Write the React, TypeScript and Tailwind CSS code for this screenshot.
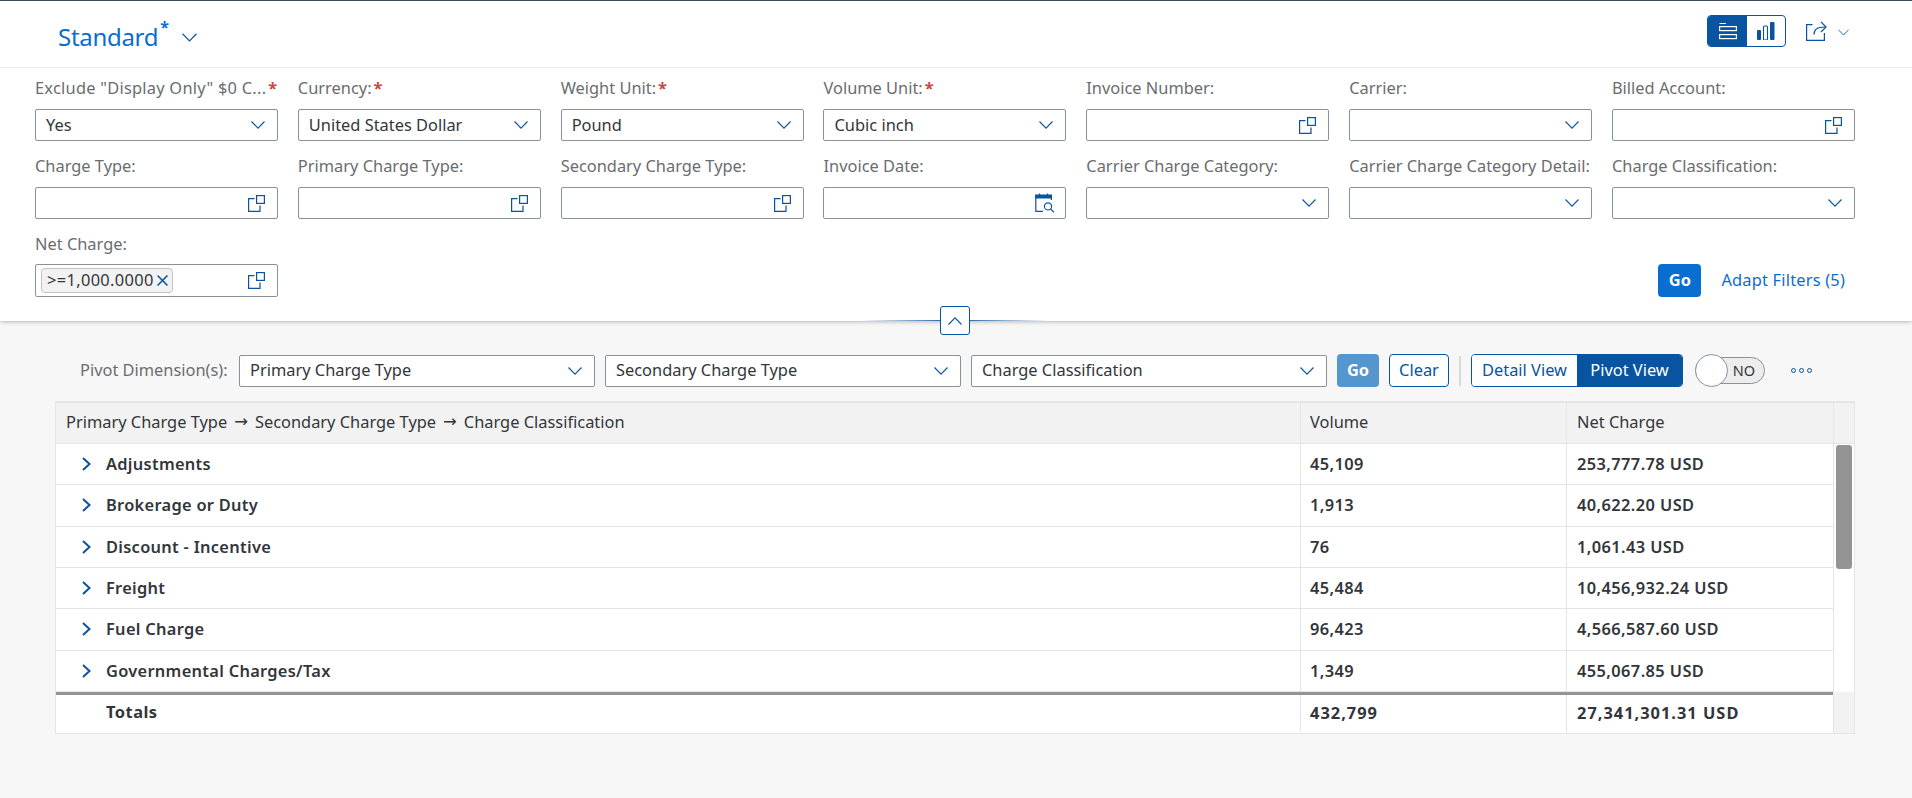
import React from 'react';

const font = "font-['Noto_Sans','Liberation_Sans',sans-serif]";

const Chevron = ({ className = 'w-[14px] h-[8px]' }: { className?: string }) => (
  <svg className={className} viewBox="0 0 14 8" fill="none" stroke="#0854a0" strokeWidth="1.1">
    <path d="M0.5 0.5 L7 7.2 L13.5 0.5" />
  </svg>
);

const ValueHelp = () => (
  <svg className="w-[17px] h-[17px]" viewBox="0 0 17 17" fill="none" stroke="#0854a0" strokeWidth="1.2">
    <path d="M6.5 3.6 H0.6 V16.4 H12 V10.5" />
    <rect x="8.6" y="0.6" width="7.8" height="7.8" />
  </svg>
);

const CalendarSearch = () => (
  <svg className="w-[20px] h-[20px]" viewBox="0 0 20 20" fill="none" stroke="#0854a0" strokeWidth="1.2">
    <path d="M8 18.4 H0.8 V2.6 H16.4 V7" />
    <path d="M0.8 2.2 H16.4 V5 H0.8 Z" fill="#0854a0" />
    <path d="M4.5 0.4 V3 M12.5 0.4 V3" />
    <circle cx="13" cy="13.4" r="3.6" />
    <path d="M15.6 16 L19 19.4" />
  </svg>
);

const Field = ({ label, req, value, icon, labelClass = '' }: { label: string; req?: boolean; value?: string; icon: 'down' | 'help' | 'date'; labelClass?: string }) => (
  <div className="flex flex-col min-w-0">
    <div className={`h-[20px] flex items-center text-[16.4px] text-[#6a6d70] whitespace-nowrap ${labelClass}`}>
      {label}
      {req && <span className="text-[#d04343] ml-[2px] font-bold">*</span>}
    </div>
    <div className="mt-[11px] h-[32px] bg-white border border-[#89919a] rounded-[2px] flex items-center justify-between pl-[10px] pr-[12px]">
      <span className="text-[16.4px] text-[#32363a]">{value}</span>
      {icon === 'down' && <Chevron />}
      {icon === 'help' && <ValueHelp />}
      {icon === 'date' && <span className="-mr-[2px]"><CalendarSearch /></span>}
    </div>
  </div>
);

const PivotSelect = ({ label, className }: { label: string; className: string }) => (
  <div className={`h-[32px] bg-white border border-[#89919a] rounded-[2px] flex items-center justify-between pl-[10px] pr-[12px] ${className}`}>
    <span className="text-[16.4px] text-[#32363a]">{label}</span>
    <Chevron />
  </div>
);

const Arrow = () => <span className="font-['DejaVu_Sans',sans-serif] mx-[7px]">→</span>;

const rows = [
  ['Adjustments', '45,109', '253,777.78 USD'],
  ['Brokerage or Duty', '1,913', '40,622.20 USD'],
  ['Discount - Incentive', '76', '1,061.43 USD'],
  ['Freight', '45,484', '10,456,932.24 USD'],
  ['Fuel Charge', '96,423', '4,566,587.60 USD'],
  ['Governmental Charges/Tax', '1,349', '455,067.85 USD'],
];

export default function App() {
  return (
    <div className={`w-[1912px] h-[798px] overflow-hidden bg-[#f7f7f7] ${font} text-[#32363a]`}>
      {/* Filter bar */}
      <div className="relative h-[321px] bg-white border-t border-[#354a5f] shadow-[0_1px_4px_rgba(0,0,0,0.25)]">
        <div className="h-[67px] border-b border-[#eeeeee] flex justify-between">
          <div className="flex items-start pl-[58px] pt-[18px]">
            <span className="text-[24px] leading-[36px] text-[#0a6ed1] tracking-[-0.3px]">Standard</span>
            <span className="text-[16px] leading-[18px] text-[#0a6ed1] font-bold ml-[2px] -mt-[1px]">*</span>
            <span className="ml-[13px] mt-[14px]"><Chevron className="w-[15px] h-[9px]" /></span>
          </div>
          <div className="flex items-start pt-[14px] pr-[63px]">
            <div className="flex h-[32px] w-[79px] rounded-[4px] border border-[#0854a0] overflow-hidden">
              <div className="w-[39px] bg-[#0854a0] flex items-center justify-center">
                <svg className="w-[18px] h-[18px]" viewBox="0 0 18 18" fill="none" stroke="#fff" strokeWidth="1.2">
                  <path d="M0.5 1.5 H7" />
                  <rect x="0.6" y="4.6" width="16.8" height="4" />
                  <rect x="0.6" y="12.6" width="16.8" height="4" />
                </svg>
              </div>
              <div className="flex-1 flex items-center justify-center">
                <svg className="w-[18px] h-[18px]" viewBox="0 0 18 18" fill="#0854a0">
                  <rect x="0" y="8" width="4" height="10" rx="1" />
                  <rect x="6.5" y="4" width="4" height="14" rx="1" fill="none" stroke="#0854a0" strokeWidth="1.1" />
                  <rect x="13" y="0" width="4.5" height="18" rx="1" />
                </svg>
              </div>
            </div>
            <div className="ml-[20px] mt-[6px]">
              <svg className="w-[21px] h-[20px]" viewBox="0 0 21 20" fill="none" stroke="#0854a0" strokeWidth="1.2">
                <path d="M6.5 3.6 H0.6 V19.4 H18.4 V12" />
                <path d="M8 13.5 C8 8.5 11 6 19 6" />
                <path d="M15 0.8 L20 6 L15 11" />
              </svg>
            </div>
            <span className="ml-[11px] mt-[14px]"><Chevron className="w-[11px] h-[7px]" /></span>
          </div>
        </div>

        <div className="pl-[35px] pr-[54px] pt-[10px]">
          <div className="grid grid-cols-[repeat(7,243px)] gap-x-[19.83px] gap-y-[15px]">
            <Field label={'Exclude "Display Only" $0 C...'} labelClass="tracking-[0.25px]" req value="Yes" icon="down" />
            <Field label="Currency:" req value="United States Dollar" icon="down" />
            <Field label="Weight Unit:" req value="Pound" icon="down" />
            <Field label="Volume Unit:" req value="Cubic inch" icon="down" />
            <Field label="Invoice Number:" icon="help" />
            <Field label="Carrier:" icon="down" />
            <Field label="Billed Account:" icon="help" />
            <Field label="Charge Type:" icon="help" />
            <Field label="Primary Charge Type:" icon="help" />
            <Field label="Secondary Charge Type:" icon="help" />
            <Field label="Invoice Date:" icon="date" />
            <Field label="Carrier Charge Category:" icon="down" />
            <Field label="Carrier Charge Category Detail:" icon="down" />
            <Field label="Charge Classification:" icon="down" />
          </div>
          <div className="flex justify-between items-end mt-[15px]">
            <div className="w-[243px]">
              <div className="h-[20px] flex items-center text-[16.4px] text-[#6a6d70]">Net Charge:</div>
              <div className="mt-[10px] h-[33px] bg-white border border-[#89919a] rounded-[2px] flex items-center justify-between pl-[5px] pr-[12px]">
                <span className="h-[25px] bg-[#f2f2f2] border border-[#c4c4c4] rounded-[4px] flex items-center pl-[5px] pr-[4px] text-[16.4px] tracking-[0.35px] gap-[3px]">
                  &gt;=1,000.0000
                  <svg className="w-[11px] h-[11px]" viewBox="0 0 10 10" stroke="#0854a0" strokeWidth="1.4"><path d="M0.5 0.5 L9.5 9.5 M9.5 0.5 L0.5 9.5" /></svg>
                </span>
                <ValueHelp />
              </div>
            </div>
            <div className="flex items-center mr-[13px]">
              <span className="w-[43px] h-[33px] bg-[#0a6ed1] text-white rounded-[4px] flex items-center justify-center text-[16.4px] font-bold">Go</span>
              <span className="ml-[20px] text-[16.4px] tracking-[0.2px] text-[#0a6ed1] whitespace-nowrap">Adapt Filters (5)</span>
            </div>
          </div>
        </div>

        {/* Collapse handle */}
        <div className="absolute left-[860px] top-[319px] w-[190px] h-[1px] bg-gradient-to-r from-transparent via-[#0854a0] to-transparent" />
        <div className="absolute left-[940px] top-[305px] w-[30px] h-[29px] bg-white border border-[#0854a0] rounded-[3px] flex items-center justify-center">
          <svg className="w-[14px] h-[8px]" viewBox="0 0 14 8" fill="none" stroke="#0854a0" strokeWidth="1.1"><path d="M0.5 7.5 L7 0.8 L13.5 7.5" /></svg>
        </div>
      </div>

      {/* Pivot toolbar */}
      <div className="flex items-center h-[33px] mt-[33px] pl-[80px]">
        <span className="w-[159px] text-[16.4px] text-[#6a6d70] whitespace-nowrap">Pivot Dimension(s):</span>
        <PivotSelect label="Primary Charge Type" className="w-[356px]" />
        <PivotSelect label="Secondary Charge Type" className="w-[356px] ml-[10px]" />
        <PivotSelect label="Charge Classification" className="w-[356px] ml-[10px]" />
        <span className="ml-[10px] w-[42px] h-[33px] bg-[#5496cd] text-white rounded-[4px] flex items-center justify-center text-[16.4px] font-bold">Go</span>
        <span className="ml-[10px] w-[60px] h-[33px] bg-white border border-[#0854a0] rounded-[4px] text-[#0854a0] flex items-center justify-center text-[16.4px]">Clear</span>
        <span className="ml-[10px] w-[2px] h-[30px] bg-[#d9d9d9]" />
        <div className="ml-[10px] flex h-[33px] w-[212px] rounded-[4px] border border-[#0854a0] overflow-hidden text-[16.4px]">
          <span className="w-[105px] bg-white text-[#0854a0] flex items-center justify-center whitespace-nowrap">Detail View</span>
          <span className="flex-1 bg-[#0854a0] text-white flex items-center justify-center whitespace-nowrap">Pivot View</span>
        </div>
        <div className="ml-[12px] relative w-[70px] h-[27px] bg-[#ededed] border border-[#89919a] rounded-full flex items-center justify-end pr-[9px] text-[14.5px] text-[#32363a]">
          NO
          <span className="absolute -left-[1px] -top-[4px] w-[33px] h-[33px] rounded-full bg-white border border-[#89919a]" />
        </div>
        <div className="ml-[26px] flex gap-[3px]">
          <span className="w-[5px] h-[5px] rounded-full border border-[#0854a0]" />
          <span className="w-[5px] h-[5px] rounded-full border border-[#0854a0]" />
          <span className="w-[5px] h-[5px] rounded-full border border-[#0854a0]" />
        </div>
      </div>

      {/* Table */}
      <div className="ml-[55px] w-[1800px] mt-[14px] border-x border-b border-t-2 border-[#e5e5e5]">
        <div className="flex h-[41px] bg-[#f2f2f2] border-b border-[#e5e5e5] text-[16.4px]">
          <div className="w-[1244px] pl-[10px] pb-[2px] flex items-center whitespace-nowrap">Primary Charge Type<Arrow />Secondary Charge Type<Arrow />Charge Classification</div>
          <div className="w-[266px] pl-[9px] pb-[2px] border-l border-[#e5e5e5] flex items-center">Volume</div>
          <div className="w-[267px] pl-[10px] pb-[2px] border-l border-[#e5e5e5] flex items-center">Net Charge</div>
          <div className="flex-1 border-l border-[#e5e5e5]" />
        </div>
        <div className="flex bg-white">
          <div className="w-[1777px]">
            {rows.map((r) => (
              <div key={r[0]} className="flex h-[41.33px] border-b border-[#e5e5e5] text-[16.4px] font-semibold">
                <div className="w-[1244px] pl-[26px] flex items-center">
                  <svg className="w-[9px] h-[14px]" viewBox="0 0 9 14" fill="none" stroke="#0854a0" strokeWidth="2"><path d="M1 1 L7.5 7 L1 13" /></svg>
                  <span className="ml-[15px] tracking-[0.3px]">{r[0]}</span>
                </div>
                <div className="w-[266px] pl-[9px] border-l border-[#e5e5e5] flex items-center tracking-[0.4px]">{r[1]}</div>
                <div className="w-[267px] pl-[10px] border-l border-[#e5e5e5] flex items-center tracking-[0.4px]">{r[2]}</div>
              </div>
            ))}
          </div>
          <div className="flex-1 border-l border-[#e5e5e5] px-[2px] pt-[1px]">
            <div className="h-[124px] bg-[#949494] rounded-[3px]" />
          </div>
        </div>
        <div className="flex h-[41px] bg-white text-[16.4px] font-bold">
          <div className="w-[1777px] flex border-t-[3px] border-[#949494]">
            <div className="w-[1244px] pl-[50px] pb-[4px] flex items-center tracking-[0.5px]">Totals</div>
            <div className="w-[266px] pl-[9px] pb-[2px] border-l border-[#e5e5e5] flex items-center tracking-[1px]">432,799</div>
            <div className="w-[267px] pl-[10px] pb-[2px] border-l border-[#e5e5e5] flex items-center tracking-[1px]">27,341,301.31 USD</div>
          </div>
          <div className="flex-1 bg-[#f2f2f2] border-l border-[#e5e5e5]" />
        </div>
      </div>
    </div>
  );
}
